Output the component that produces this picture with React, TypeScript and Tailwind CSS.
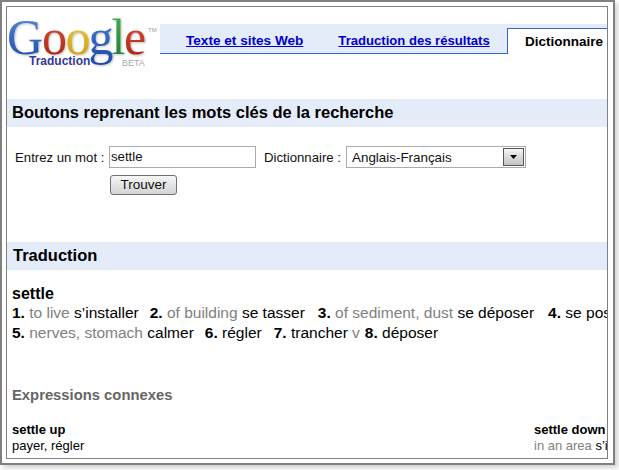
const sans = "font-['Liberation_Sans',Arial,sans-serif]";

function Logo() {
  return (
    <div className="relative w-[153px] h-[62px] shrink-0 font-['Liberation_Serif',serif] text-[50px] leading-[56px]">
      <div className="flex mt-[2px] [filter:drop-shadow(1px_1px_1px_rgba(0,0,0,0.25))]">
        <span className="mr-[-1px] bg-linear-to-b from-[#5b8fe0] to-[#1c46a6] bg-clip-text text-transparent">G</span>
        <span className="mr-[-1.5px] bg-linear-to-b from-[#e6583c] to-[#a81c10] bg-clip-text text-transparent">o</span>
        <span className="mr-[-2px] bg-linear-to-b from-[#f7d33c] to-[#c99a00] bg-clip-text text-transparent">o</span>
        <span className="mr-[-2px] bg-linear-to-b from-[#4f86dc] to-[#1c46a6] bg-clip-text text-transparent">g</span>
        <span className="mr-[-1.5px] bg-linear-to-b from-[#45b356] to-[#1c7a2e] bg-clip-text text-transparent">l</span>
        <span className="bg-linear-to-b from-[#e6583c] to-[#a81c10] bg-clip-text text-transparent">e</span>
      </div>
      <span className={`absolute left-[22px] top-[46px] text-[12px] leading-[16px] font-bold text-[#35399a] ${sans}`}>
        Traduction
      </span>
      <span className={`absolute left-[115px] top-[50px] text-[9px] leading-[12px] text-[#aaaaaa] ${sans}`}>
        BETA
      </span>
      <span className={`absolute left-[141px] top-[19px] text-[6px] leading-[8px] text-[#999999] ${sans}`}>
        TM
      </span>
    </div>
  );
}

function Tabs() {
  return (
    <div className="flex-1 h-[30px] mt-[17px] flex bg-[#e5ecf9] font-bold">
      <div className="flex-1 flex border-b border-[#3366cc] pt-[9px] pl-[26px] gap-[35px]">
        <a className="text-[13.6px] text-[#0000cc] underline leading-[16px]">Texte et sites Web</a>
        <a className="text-[13.1px] text-[#0000cc] underline leading-[16px]">Traduction des résultats</a>
      </div>
      <div className="w-[100px] mt-[4px] bg-white border-t border-l border-[#3366cc] pl-[17px] pt-[5px] text-[13.5px] leading-[16px] text-black whitespace-nowrap">
        Dictionnaire
      </div>
    </div>
  );
}

function SectionBar({ title, indent }: { title: string; indent: string }) {
  return (
    <div className={`h-[28px] pb-[2px] bg-[#e5ecf9] flex items-center text-[16.5px] font-bold text-black ${indent}`}>
      {title}
    </div>
  );
}

function SearchForm() {
  return (
    <div className="mt-[19px] text-[13.2px] text-[#111111]">
      <div className="flex items-center h-[22px]">
        <span className="ml-[8px] w-[94px] pt-[2px] whitespace-nowrap">Entrez un mot :</span>
        <div className="w-[147px] h-[22px] border border-[#aaaaaa] pl-[1px] leading-[20px]">settle</div>
        <span className="ml-[8px] w-[82px] pt-[2px] whitespace-nowrap">Dictionnaire :</span>
        <div className="w-[180px] h-[22px] border border-[#aaaaaa] pl-[5px] flex items-center justify-between pr-[1px]">
          <span className="text-[13.4px] pt-[2px]">Anglais-Français</span>
          <div className="w-[21px] h-[18px] border border-[#555555] bg-linear-to-b from-[#f4f4f4] to-[#c4c4c4] flex items-center justify-center">
            <svg width="7" height="4" viewBox="0 0 7 4">
              <path d="M0 0h7L3.5 4z" fill="#000" />
            </svg>
          </div>
        </div>
      </div>
      <div className="mt-[7px] ml-[103px] w-[67px] h-[20px] rounded-[3px] border border-[#707070] bg-linear-to-b from-[#f6f6f6] to-[#d4d4d4] flex items-center justify-center text-[13.5px]">
        Trouver
      </div>
    </div>
  );
}

function Sense({ n, hint, word, gap = "mr-[12px]" }: { n: string; hint?: string; word: string; gap?: string }) {
  return (
    <span className={gap}>
      <b>{n}</b> {hint && <span className="text-[#808080]">{hint} </span>}
      {word}
    </span>
  );
}

function Results() {
  return (
    <div className="mt-[14px] ml-[5px] text-black">
      <div className="text-[16px] font-bold leading-[19px]">settle</div>
      <div className="text-[15.5px] leading-[20px] whitespace-nowrap">
        <Sense n="1." hint="to live" word="s’installer" gap="mr-[11px]" />
        <Sense n="2." hint="of building" word="se tasser" gap="mr-[13px]" />
        <Sense n="3." hint="of sediment, dust" word="se déposer" gap="mr-[14px]" />
        <Sense n="4." word="se poser" />
      </div>
      <div className="text-[15.5px] leading-[20px] whitespace-nowrap">
        <Sense n="5." hint="nerves, stomach" word="calmer" gap="mr-[11px]" />
        <Sense n="6." word="régler" />
        <span className="mr-[5px]">
          <b>7.</b> trancher <span className="text-[#808080]">v</span>
        </span>
        <Sense n="8." word="déposer" />
      </div>
    </div>
  );
}

function Related() {
  return (
    <div className="mt-[42px] ml-[5px]">
      <div className="text-[14.8px] font-bold leading-[20px] text-[#666666]">Expressions connexes</div>
      <div className="mt-[17px] flex text-[13px] leading-[16px] whitespace-nowrap">
        <div className="w-[522px] shrink-0">
          <div className="font-bold">settle up</div>
          <div>payer, régler</div>
        </div>
        <div>
          <div className="font-bold">settle down</div>
          <div>
            <span className="text-[#808080]">in an area</span> s’installer
          </div>
        </div>
      </div>
    </div>
  );
}

export default function App() {
  return (
    <div className={`w-[619px] h-[470px] bg-white ${sans}`}>
      <div className="w-[615px] h-[465px] border-2 border-[#808080] pl-[4px] pt-[4px] pr-[5px] bg-white shadow-[3px_3px_5px_rgba(0,0,0,0.18)]">
        <div className="h-[453px] border border-[#808080] overflow-hidden">
          <div className="flex h-[92px]">
            <Logo />
            <Tabs />
          </div>
          <SectionBar title="Boutons reprenant les mots clés de la recherche" indent="pl-[5px]" />
          <SearchForm />
          <div className="mt-[47px]">
            <SectionBar title="Traduction" indent="pl-[6px]" />
          </div>
          <Results />
          <Related />
        </div>
      </div>
    </div>
  );
}
